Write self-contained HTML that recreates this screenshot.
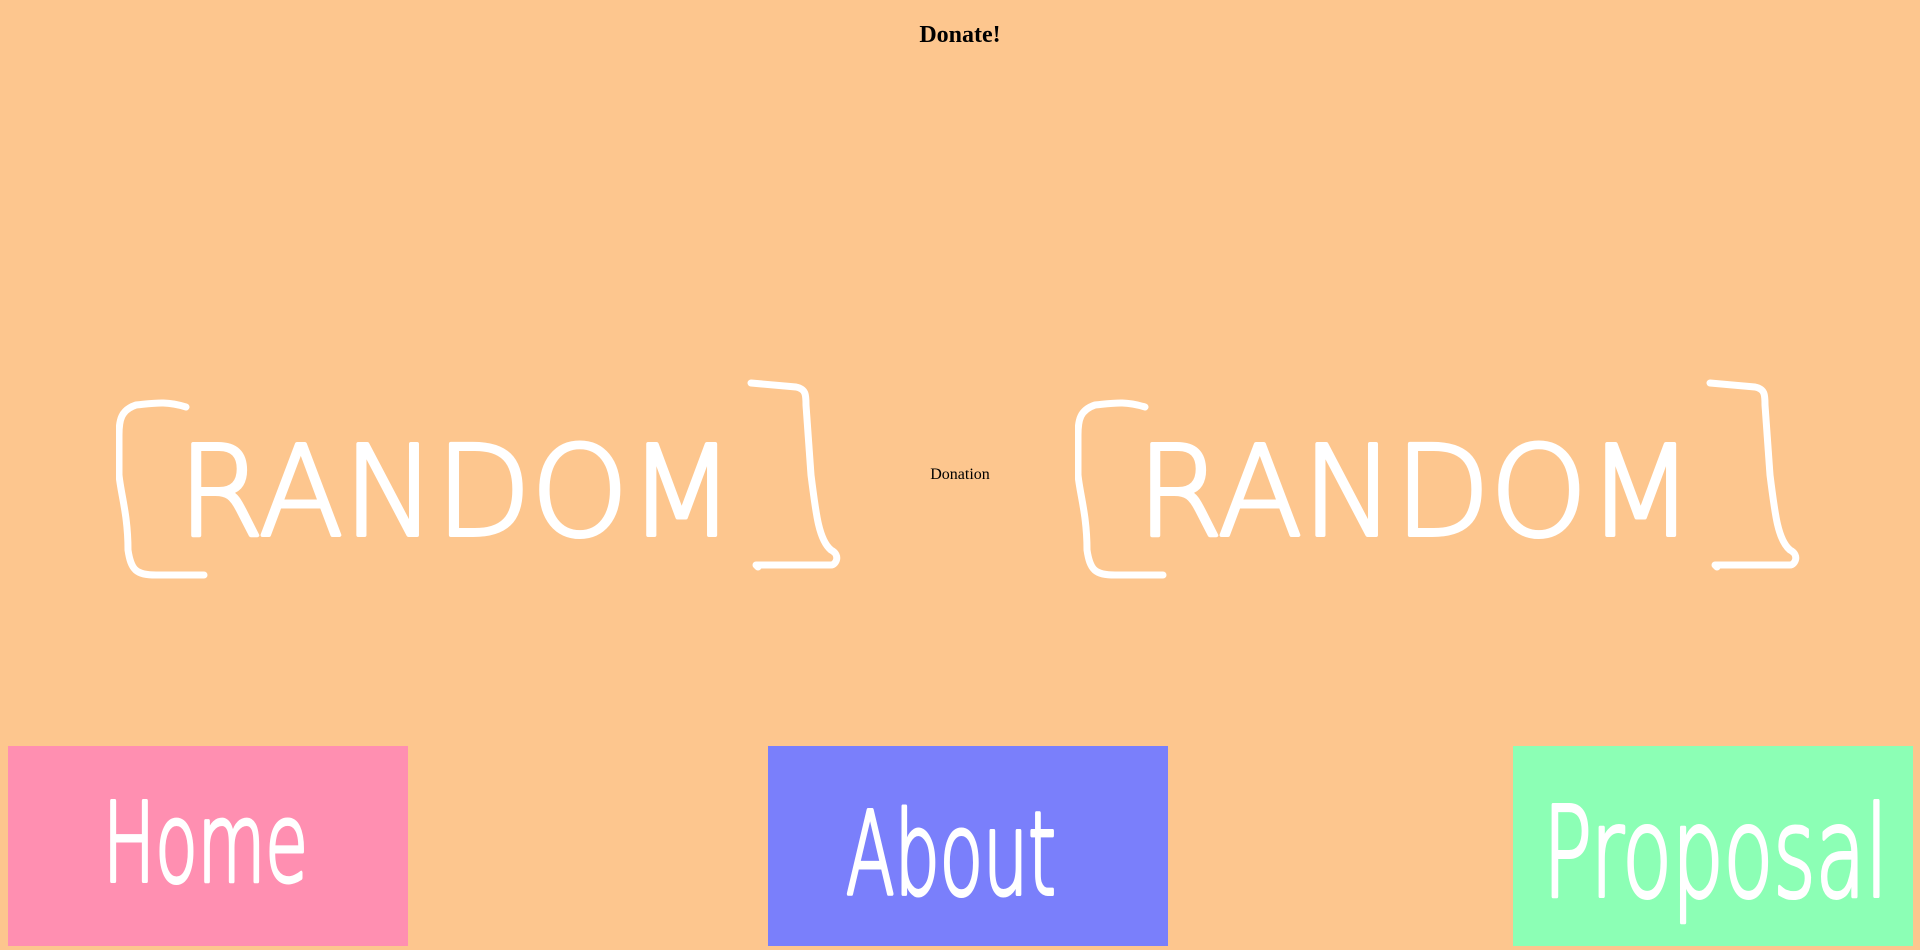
<!DOCTYPE html>
<html><head><meta charset="utf-8"><style>
html,body{margin:0;padding:0;width:1920px;height:950px;overflow:hidden;background:#FDC68E;font-family:"Liberation Serif",serif;}
h1{position:absolute;top:22px;left:0;width:1920px;text-align:center;font-size:24px;margin:0;font-weight:bold;}
.don{position:absolute;left:900px;top:466px;width:120px;text-align:center;font-size:16px;}
svg{position:absolute;}
.p{fill:none;stroke:#fff;stroke-width:7;stroke-linecap:round;stroke-linejoin:round;}
.t{font-family:"DejaVu Sans","Liberation Sans",sans-serif;font-weight:200;fill:#fff;stroke:#fff;stroke-width:4;stroke-linejoin:round;}
.b{position:absolute;top:746px;width:400px;height:200px;}
</style></head><body>
<h1>Donate!</h1>
<svg style="left:116px;top:375px" width="730" height="215">
<path class="p" d="M70 32 C50 26 40 28 20 30 C5 35 3 45 3 60 L3 100 C5 120 12 140 12 175 C15 195 20 200 40 200 L88 200" />
<text class="t" x="62" y="160" font-size="125" textLength="557" lengthAdjust="spacingAndGlyphs">RANDOM</text>
<path class="p" d="M635 8 L680 12 C690 14 690 20 690 30 L695 100 C700 140 703 165 715 175 C725 180 720 190 715 190 L640 190 L642 192" />
</svg>
<svg style="left:1075px;top:375px" width="730" height="215">
<path class="p" d="M70 32 C50 26 40 28 20 30 C5 35 3 45 3 60 L3 100 C5 120 12 140 12 175 C15 195 20 200 40 200 L88 200" />
<text class="t" x="62" y="160" font-size="125" textLength="557" lengthAdjust="spacingAndGlyphs">RANDOM</text>
<path class="p" d="M635 8 L680 12 C690 14 690 20 690 30 L695 100 C700 140 703 165 715 175 C725 180 720 190 715 190 L640 190 L642 192" />
</svg>
<div class="don">Donation</div>
<div class="b" style="left:8px;background:#FF8FB1"><svg width="400" height="200"><text class="t" x="95" y="135" font-size="110" textLength="205" lengthAdjust="spacingAndGlyphs">Home</text></svg></div>
<div class="b" style="left:768px;background:#7A7FFB"><svg width="400" height="200"><text class="t" x="78" y="148" font-size="115" textLength="210" lengthAdjust="spacingAndGlyphs">About</text></svg></div>
<div class="b" style="left:1513px;background:#8CFFB5"><svg width="400" height="200"><text class="t" x="30" y="150" font-size="125" textLength="345" lengthAdjust="spacingAndGlyphs">Proposal</text></svg></div>
</body></html>
